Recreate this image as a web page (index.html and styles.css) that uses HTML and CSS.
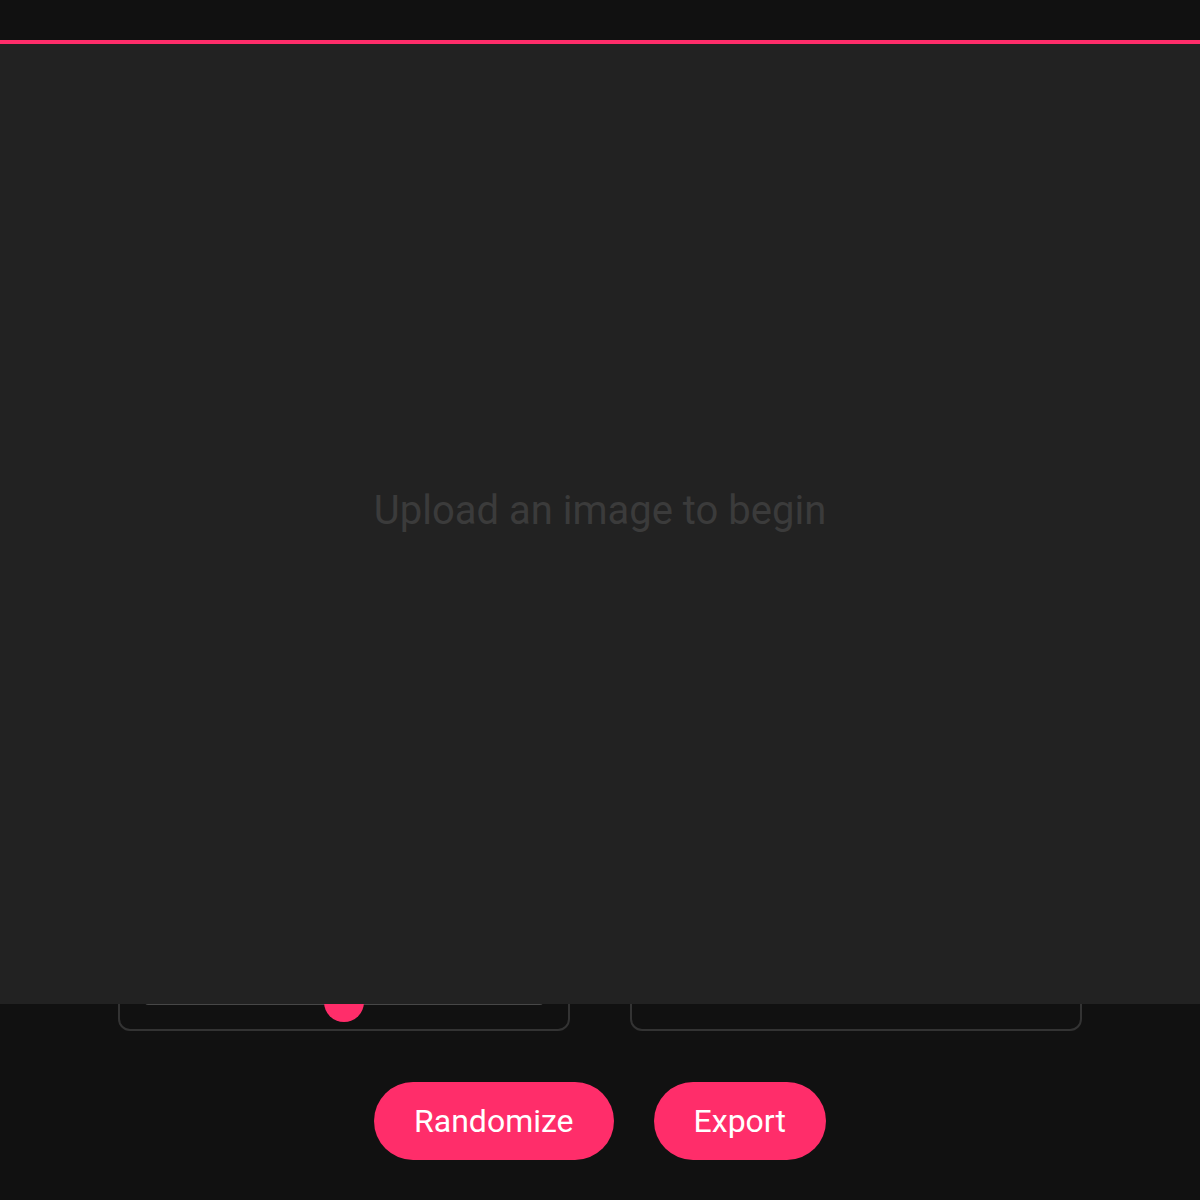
FILE: index.html
```html
<!DOCTYPE html>
<html lang="en">
<head>
<meta charset="utf-8">
<title>Image Glitcher</title>
<link rel="stylesheet" href="styles.css">
</head>
<body>
<header class="topbar"></header>

<main class="controls">
  <section class="card">
    <div class="card-head"><span>Shift</span><span>50</span></div>
    <input class="slider" type="range" min="0" max="100" value="50">
  </section>
  <section class="card">
    <div class="card-head"><span>Noise</span><span>50</span></div>
    <input class="slider" type="range" min="0" max="100" value="50">
  </section>
  <section class="card">
    <div class="card-head"><span>Intensity</span><span>50</span></div>
    <input class="slider" type="range" min="0" max="100" value="50">
  </section>
  <section class="card">
    <div class="card-head"><span>Mode</span><span>RGB</span></div>
    <div class="card-body"></div>
  </section>
</main>

<div class="actions">
  <button class="btn" type="button">Randomize</button>
  <button class="btn" type="button">Export</button>
</div>

<div class="preview">
  <p class="preview-hint">Upload an image to begin</p>
</div>
</body>
</html>
```

FILE: styles.css
```css
* { box-sizing: border-box; }

html, body {
  margin: 0;
  padding: 0;
  background: #111111;
  font-family: Roboto, "Noto Sans", "Liberation Sans", sans-serif;
  color: #eeeeee;
}

.topbar {
  height: 44px;
  background: #111111;
  border-bottom: 4px solid #ff2d6a;
}

.controls {
  max-width: 964px;
  margin: 0 auto;
  padding-top: 767px;
  display: grid;
  grid-template-columns: 1fr 1fr;
  gap: 24px 60px;
}

.card {
  border: 2px solid #333333;
  border-radius: 12px;
  padding: 15px 25px 7px;
  height: 98px;
}

.card-head {
  display: flex;
  justify-content: space-between;
  font-size: 16px;
  line-height: 24px;
  margin-bottom: 8px;
  color: #cccccc;
}

.card-body { height: 40px; }

.slider {
  -webkit-appearance: none;
  appearance: none;
  display: block;
  width: 100%;
  height: 40px;
  margin: 0;
  background: transparent;
}

.slider::-webkit-slider-runnable-track {
  height: 6px;
  background: #474747;
  border-radius: 3px;
}

.slider::-webkit-slider-thumb {
  -webkit-appearance: none;
  width: 40px;
  height: 40px;
  margin-top: -17px;
  border-radius: 50%;
  background: #ff2d6a;
  border: none;
}

.actions {
  display: flex;
  justify-content: center;
  gap: 40px;
  margin-top: 51px;
  padding-bottom: 40px;
}

.btn {
  height: 78px;
  padding: 0 40px;
  border: none;
  border-radius: 39px;
  background: #ff2d6a;
  color: #ffffff;
  font-family: Roboto, "Noto Sans", "Liberation Sans", sans-serif;
  font-size: 32px;
  cursor: pointer;
}

.preview {
  position: fixed;
  top: 44px;
  left: 0;
  right: 0;
  height: 960px;
  background: #222222;
  display: flex;
  align-items: center;
  justify-content: center;
  padding-bottom: 28px;
}

.preview-hint {
  margin: 0;
  font-size: 40px;
  color: #3b3b3b;
}
```
